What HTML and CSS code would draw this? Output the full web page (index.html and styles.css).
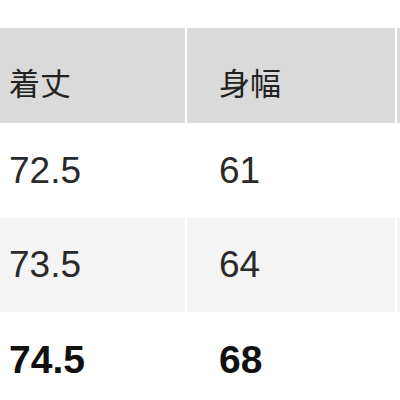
FILE: index.html
```html
<!DOCTYPE html>
<html lang="ja">
<head>
<meta charset="utf-8">
<link rel="stylesheet" href="styles.css">
</head>
<body>
<div class="table">
  <div class="cell head first"><span>着丈</span></div>
  <div class="cell head second"><span>身幅</span></div>
  <div class="cell head third"></div>

  <div class="cell first"><span>72.5</span></div>
  <div class="cell second"><span>61</span></div>
  <div class="cell third"></div>

  <div class="cell alt first"><span>73.5</span></div>
  <div class="cell alt second"><span>64</span></div>
  <div class="cell alt third"></div>

  <div class="cell bold first"><span>74.5</span></div>
  <div class="cell bold second"><span>68</span></div>
  <div class="cell bold third"></div>
</div>
</body>
</html>
```

FILE: styles.css
```css
html, body {
  margin: 0;
  padding: 0;
  background: #ffffff;
  width: 400px;
  height: 400px;
  overflow: hidden;
}

.table {
  margin-top: 28px;
  display: grid;
  grid-template-columns: 185px 208px 100px;
  grid-template-rows: 95px 95px 94px 95px;
  column-gap: 2px;
  width: 400px;
  overflow: hidden;
  font-family: "Liberation Sans", "Noto Sans CJK JP", sans-serif;
  color: #2a2a2a;
}

.cell {
  display: flex;
  align-items: center;
  background: #ffffff;
  font-size: 37px;
  white-space: nowrap;
}

.cell.head {
  background: #dadada;
  font-size: 31px;
  color: #222222;
  padding-top: 12px;
}

.cell.alt {
  background: #f4f4f4;
}

.cell.bold {
  font-weight: bold;
  font-size: 39px;
  color: #111111;
}

.first {
  padding-left: 9px;
}

.second {
  padding-left: 32px;
}
```
